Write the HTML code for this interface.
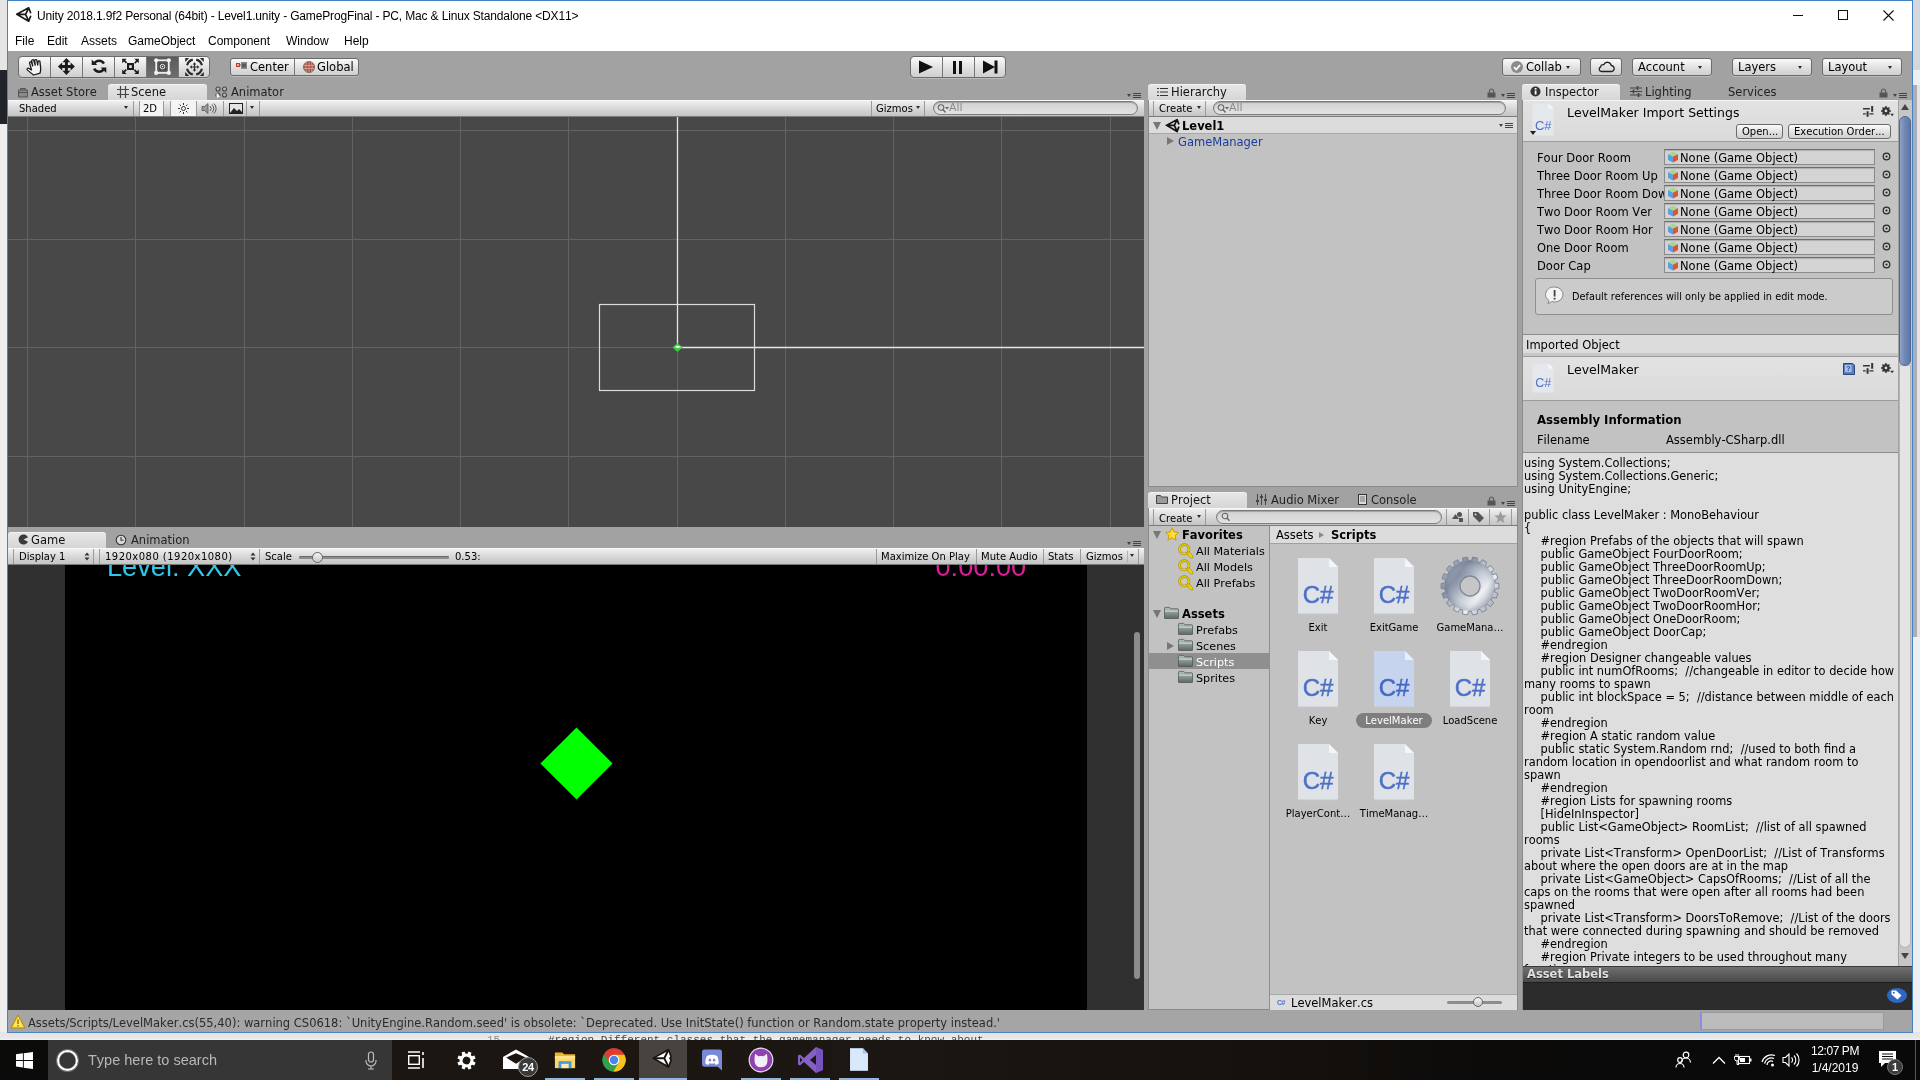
<!DOCTYPE html><html><head><meta charset="utf-8"><title>Unity</title><style>*{box-sizing:border-box;margin:0;padding:0}
html,body{width:1920px;height:1080px;overflow:hidden;background:#f2f2f2}
body{position:relative;will-change:transform;font-kerning:none;font-family:"DejaVu Sans","Liberation Sans",sans-serif;font-size:11.5px;color:#000;line-height:1}
.a{position:absolute}
.t{position:absolute;white-space:pre;line-height:16px;height:16px}
.seg{font-family:"Liberation Sans",sans-serif}
.b{font-weight:bold}
/* unity panels */
.panel{position:absolute;background:#c2c2c2}
.tab{position:absolute;height:17px;margin-top:1px;height:16px;border-top:1px solid #f2f2f2;border-radius:3px 3px 0 0;background:linear-gradient(#e6e6e6,#d6d6d6)}
.tabt{position:absolute;white-space:pre;line-height:16px;height:16px;font-size:11.5px;color:#111}
.tb{position:absolute;height:17px;background:linear-gradient(#f0f0f0,#dadada 45%,#c4c4c4);border-top:1px solid #f8f8f8;border-bottom:1px solid #7a7a7a}
.tbsep{position:absolute;width:1px;top:0;bottom:0;background:#9a9a9a}
.search{position:absolute;height:14px;border-radius:7px;background:linear-gradient(#d2d2d2,#e2e2e2);border:1px solid #7d7d7d;box-shadow:inset 0 1px 1px rgba(0,0,0,.25)}
.btn{position:absolute;border:1px solid #6b6b6b;border-radius:3px;background:linear-gradient(#fbfbfb,#dedede 60%,#cfcfcf);box-shadow:0 1px 0 rgba(255,255,255,.25)}
.dd{position:absolute;width:0;height:0;border-left:2.500px solid transparent;border-right:2.500px solid transparent;border-top:3.500px solid #2a2a2a}
</style></head><body>
<!-- desktop strips behind the Unity window -->
<div class="a" style="left:0;top:0;width:8px;height:70px;background:#e6e6e6"></div>
<div class="a" style="left:0;top:70px;width:8px;height:54px;background:#20242a"></div>
<div class="a" style="left:0;top:124px;width:8px;height:916px;background:linear-gradient(90deg,#f3ede9,#e8f0fa)"></div>
<div class="a" style="left:1912px;top:0;width:8px;height:1040px;background:#eceff4"></div><div class="a" style="left:1912px;top:0;width:8px;height:70px;background:#d4d8de"></div><div class="a" style="left:1913px;top:85px;width:4px;height:552px;background:#a9aeb8"></div><div class="a" style="left:1917px;top:85px;width:3px;height:552px;background:#e8e2e2"></div>
<div class="a" style="left:0;top:1032px;width:1920px;height:8px;background:linear-gradient(#dfe6ee,#ece4e0 40%,#e4e8ee 70%,#f4f2f0);overflow:hidden">
  <div class="a" style="left:487px;top:1px;font-family:'Liberation Mono',monospace;font-size:11px;color:#8a8a8a;white-space:pre;line-height:14px">15</div>
  <div class="a" style="left:548px;top:1px;font-family:'Liberation Mono',monospace;font-size:11px;color:#444;white-space:pre;line-height:14px">#region Different classes that the gamemanager needs to know about</div>
</div>

<!-- Unity window frame, title bar, menu, main toolbar -->
<div class="a" style="left:7px;top:0;width:1906px;height:1033px;background:#a2a2a2;border:1px solid #4583c2"></div>
<div class="a" style="left:8px;top:1px;width:1904px;height:50px;background:#fff"></div>
<svg class="a" style="left:15px;top:6px" width="18" height="18" viewBox="0 0 18 18"><path d="M15.800 7.200 13.700 1.800 1.800 8.300 13.700 15.200 15.800 9.800M1.800 8.300H10.600M10.600 8.400 13.700 1.800M10.600 8.400 13.700 15.200" fill="none" stroke="#1a1a1a" stroke-width="1.700" stroke-linejoin="round"/></svg>
<div class="t seg" style="left:37px;top:8px;font-size:12px;letter-spacing:-0.15px">Unity 2018.1.9f2 Personal (64bit) - Level1.unity - GameProgFinal - PC, Mac &amp; Linux Standalone &lt;DX11&gt;</div>
<div class="a" style="left:1793px;top:15px;width:10px;height:1px;background:#111"></div>
<div class="a" style="left:1838px;top:10px;width:10px;height:10px;border:1px solid #111"></div>
<svg class="a" style="left:1883px;top:10px" width="11" height="11" viewBox="0 0 11 11"><path d="M.5.5l10 10M10.500.5l-10 10" stroke="#111" stroke-width="1.1" fill="none"/></svg>
<div class="t seg" style="left:15px;top:33px;font-size:12px">File</div>
<div class="t seg" style="left:47px;top:33px;font-size:12px">Edit</div>
<div class="t seg" style="left:81px;top:33px;font-size:12px">Assets</div>
<div class="t seg" style="left:128px;top:33px;font-size:12px">GameObject</div>
<div class="t seg" style="left:208px;top:33px;font-size:12px">Component</div>
<div class="t seg" style="left:286px;top:33px;font-size:12px">Window</div>
<div class="t seg" style="left:344px;top:33px;font-size:12px">Help</div>
<!-- transform tools -->
<div class="btn" style="left:18px;top:56px;width:192px;height:22px;border-radius:4px;overflow:hidden">
  <div class="a" style="left:127px;top:0;width:32px;height:20px;background:linear-gradient(#5a5a5a,#6e6e6e)"></div>
  <div class="tbsep" style="left:31px;background:#777"></div><div class="tbsep" style="left:63px;background:#777"></div><div class="tbsep" style="left:95px;background:#777"></div><div class="tbsep" style="left:127px;background:#777"></div><div class="tbsep" style="left:159px;background:#777"></div>
</div>
<svg class="a" style="left:18px;top:56px" width="192" height="22" viewBox="0 0 192 22">
<g transform="translate(7.600,2.600) rotate(-16 8 8) scale(1.130,1.020)"><path d="M5 15.800C3.500 13.500 2 11 1 9.500 .3 8.300 1.800 7.300 2.800 8.400L4.500 10.500V3.500C4.500 2.200 6.300 2.200 6.300 3.500L6.500 7 6.800 2C6.900.7 8.700.8 8.700 2L8.800 7 9.500 2.500C9.700 1.300 11.400 1.500 11.300 2.800L11 7.500 12 4.500C12.400 3.400 14 3.800 13.700 5 13.300 7 13 10 12.500 12 12.200 13.500 11.500 14.500 11 15.800Z" fill="#f6f6f6" stroke="#1c1c1c" stroke-width="1.150" stroke-linejoin="round"/></g>
<g transform="translate(48.400,10.500)"><path d="M0-8.500 4-4.200H1.500V-1.500H4.200V-4L8.500 0 4.200 4V1.500H1.500V4.200H4L0 8.500-4 4.200H-1.500V1.500H-4.200V4L-8.500 0-4.200-4V-1.500H-1.500V-4.200H-4Z" fill="#1c1c1c"/></g>
<g transform="translate(81,10.200)" fill="none" stroke="#1c1c1c" stroke-width="2.500"><path d="M-4.800-2.600A5.500 5.500 0 0 1 4.900-2.500"/><path d="M4.800 2.600A5.500 5.500 0 0 1-4.900 2.500"/><path d="M-7.300-6.800V-1.200H-1.700Z" fill="#1c1c1c" stroke="none"/><path d="M7.300 6.800V1.200H1.700Z" fill="#1c1c1c" stroke="none"/></g>
<g transform="translate(112.500,10.600)" fill="#1c1c1c"><path d="M-3.500-3.500h7v7h-7zM-1.300-1.300v2.600h2.600v-2.600z" fill-rule="evenodd"/><path d="M-8.300-7.800h4.500l-1.500 1.500 2 2-1.200 1.200-2-2-1.800 1.800zM8.300-7.800v4.500l-1.500-1.500-2 2-1.200-1.200 2-2-1.800-1.800zM-8.300 7.400v-4.500l1.500 1.500 2-2 1.200 1.200-2 2 1.800 1.800zM8.300 7.400h-4.500l1.500-1.500-2-2 1.200-1.200 2 2 1.800-1.800z"/></g>
<g transform="translate(144.500,10.600)"><rect x="-4" y="-4" width="8" height="8" fill="#474747"/><rect x="-6.300" y="-6.300" width="12.600" height="12.600" fill="none" stroke="#f2f2f2" stroke-width="1.700"/><g fill="#f2f2f2"><circle cx="-6.300" cy="-6.300" r="2.100"/><circle cx="6.300" cy="-6.300" r="2.100"/><circle cx="-6.300" cy="6.300" r="2.100"/><circle cx="6.300" cy="6.300" r="2.100"/></g><circle r="2.300" fill="none" stroke="#e8e8e8" stroke-width="1"/><circle r=".8" fill="#e8e8e8"/></g>
<g transform="translate(176.500,11)"><g fill="none" stroke="#2a2a2a" stroke-width="2.200"><path d="M7.4 1.7A7.6 7.6 0 0 1 1.7 7.4"/><path d="M-1.7 7.4A7.6 7.6 0 0 1 -7.4 1.7"/><path d="M-7.4 -1.7A7.6 7.6 0 0 1 -1.7 -7.4"/><path d="M1.7 -7.4A7.6 7.6 0 0 1 7.4 -1.7"/></g><path d="M-9.300-9h4l-4 4zM9.300-9v4l-4-4zM-9.300 9v-4l4 4zM9.300 9h-4l4-4z" fill="#2a2a2a"/><path d="M0-4.800 1.800-2.600H.6V-.6H2.600V-1.800L4.800 0 2.600 1.800V.6H.6V2.600H1.800L0 4.800-1.800 2.600H-.6V.6H-2.600V1.800L-4.800 0-2.600-1.800V-.6H-.6V-2.600H-1.800Z" fill="#2a2a2a"/></g>
</svg>
<!-- pivot buttons -->
<div class="btn" style="left:230px;top:58px;width:129px;height:18px;border-radius:3px"><div class="tbsep" style="left:63px;background:#777"></div></div>
<svg class="a" style="left:236px;top:62px" width="11" height="10" viewBox="0 0 11 10"><rect x="0" y="1" width="4" height="4" fill="#c0392b"/><rect x="1" y="2" width="2" height="2" fill="#e8a79f"/><rect x="5" y="0" width="6" height="7" fill="#8a8a8a"/><rect x="6" y="1.500" width="4" height="4" fill="#5a5a5a"/><path d="M4 3h1" stroke="#555"/></svg>
<svg class="a" style="left:303px;top:61px" width="12" height="12" viewBox="0 0 12 12"><circle cx="6" cy="6" r="5.500" fill="#b3503f"/><circle cx="6" cy="6" r="5.500" fill="none" stroke="#6e6e6e" stroke-width="1"/><path d="M1 4.500h10M.8 7.500h10.400M6 .5v11M3.500 1.200Q2 6 3.500 10.800M8.500 1.200Q10 6 8.500 10.800" fill="none" stroke="#d9b0a6" stroke-width=".7"/></svg>
<div class="t" style="left:250px;top:59px">Center</div>
<div class="t" style="left:317px;top:59px">Global</div>
<!-- play controls -->
<div class="btn" style="left:910px;top:56px;width:96px;height:22px;border-radius:4px"><div class="tbsep" style="left:31px;background:#777"></div><div class="tbsep" style="left:63px;background:#777"></div></div>
<svg class="a" style="left:910px;top:56px" width="96" height="22" viewBox="0 0 96 22"><path d="M9 4.500l14 6.500-14 6.500z" fill="#111"/><rect x="43" y="5" width="3" height="13" fill="#111"/><rect x="49" y="5" width="3" height="13" fill="#111"/><path d="M73 4.500l12 6.500-12 6.500z" fill="#111"/><rect x="84.500" y="4.500" width="3" height="13" fill="#111"/></svg>
<!-- right side buttons -->
<div class="btn" style="left:1502px;top:58px;width:79px;height:18px"></div>
<div class="a" style="left:1511px;top:61px;width:12px;height:12px;border-radius:6px;background:#8b8b8b"></div>
<svg class="a" style="left:1511px;top:61px" width="12" height="12" viewBox="0 0 12 12"><path d="M3 6.200l2.200 2.300L9 4" stroke="#fff" stroke-width="1.800" fill="none"/></svg>
<div class="t" style="left:1526px;top:59px">Collab</div><div class="dd" style="left:1566px;top:66px"></div>
<div class="btn" style="left:1590px;top:58px;width:32px;height:18px"></div>
<svg class="a" style="left:1597px;top:61px" width="18" height="12" viewBox="0 0 18 12"><path d="M4.500 10.500h9.500a3 3 0 0 0 .3-6 4 4 0 0 0-7.600-.8 2.300 2.300 0 0 0-3 2.200 2.400 2.400 0 0 0 .8 4.600z" fill="none" stroke="#222" stroke-width="1.300"/></svg>
<div class="btn" style="left:1632px;top:58px;width:80px;height:18px"></div>
<div class="t" style="left:1638px;top:59px">Account</div><div class="dd" style="left:1698px;top:66px"></div>
<div class="btn" style="left:1732px;top:58px;width:80px;height:18px"></div>
<div class="t" style="left:1738px;top:59px">Layers</div><div class="dd" style="left:1798px;top:66px"></div>
<div class="btn" style="left:1822px;top:58px;width:80px;height:18px"></div>
<div class="t" style="left:1828px;top:59px">Layout</div><div class="dd" style="left:1888px;top:66px"></div>

<!-- Scene panel -->
<div class="tabt" style="left:31px;top:84px;color:#222">Asset Store</div>
<div class="tab" style="left:108px;top:83px;width:99px"></div>
<div class="tabt" style="left:131px;top:84px">Scene</div>
<div class="tabt" style="left:231px;top:84px;color:#222">Animator</div>
<svg class="a" style="left:17px;top:86px" width="12" height="12" viewBox="0 0 12 12"><path d="M1.500 4h9v7h-9zM3.500 4V2.500h5V4" fill="#8a8a8a" stroke="#555" stroke-width="1"/><path d="M1.500 6.500h9" stroke="#555"/></svg>
<svg class="a" style="left:117px;top:86px" width="12" height="12" viewBox="0 0 12 12"><path d="M3.500 0v12M8.500 0v12M0 3.500h12M0 8.500h12" stroke="#444" stroke-width="1.200"/></svg>
<svg class="a" style="left:215px;top:86px" width="13" height="12" viewBox="0 0 13 12"><g fill="#bbb" stroke="#444" stroke-width="1.100"><circle cx="3" cy="3" r="2"/><circle cx="9.500" cy="3" r="2"/><circle cx="3" cy="9" r="2"/><circle cx="9.500" cy="9" r="2"/></g></svg>
<div class="dd" style="left:1127px;top:94px;border-left-width:2.500px;border-right-width:2.500px;border-top-width:3px;border-top-color:#444"></div><div class="a" style="left:1133px;top:93px;width:8px;height:1px;background:#444;box-shadow:0 2px 0 #444,0 4px 0 #444"></div>
<div class="tb" style="left:8px;top:100px;width:1136px"></div>
<div class="t" style="left:19px;top:101px;font-size:10px">Shaded</div><div class="dd" style="left:124px;top:106px;border-left-width:2.500px;border-right-width:2.500px;border-top-width:3px"></div>
<div class="tbsep" style="left:133px;top:101px;height:15px"></div>
<div class="a" style="left:139px;top:101px;width:25px;height:15px;background:#f4f4f4;border-left:1px solid #9a9a9a;border-right:1px solid #9a9a9a"></div><div class="t" style="left:143px;top:101px;font-size:10px">2D</div>
<div class="a" style="left:170px;top:101px;width:27px;height:15px;background:#f4f4f4;border-left:1px solid #9a9a9a;border-right:1px solid #9a9a9a"></div>
<svg class="a" style="left:177px;top:102px" width="13" height="13" viewBox="0 0 13 13"><circle cx="6.500" cy="6.500" r="2" fill="none" stroke="#333" stroke-width="1"/><path d="M6.500 1v2M6.500 10v2M1 6.500h2M10 6.500h2M2.600 2.600l1.400 1.400M9 9l1.400 1.400M2.600 10.400 4 9M9 4l1.400-1.400" stroke="#333" stroke-width="1"/></svg>
<div class="tbsep" style="left:223px;top:101px;height:15px"></div>
<svg class="a" style="left:201px;top:102px" width="16" height="13" viewBox="0 0 16 13"><path d="M1 4.500h2.500l3.500-3v10l-3.500-3H1z" fill="#999" stroke="#555" stroke-width=".8"/><path d="M9 4a3.500 3.500 0 0 1 0 5M11 2.500a5.500 5.500 0 0 1 0 8M13 1.500a7 7 0 0 1 0 10" fill="none" stroke="#555" stroke-width="1"/></svg>
<svg class="a" style="left:229px;top:103px" width="14" height="11" viewBox="0 0 14 11"><rect x=".5" y=".5" width="13" height="10" fill="#e4e4e4" stroke="#222"/><path d="M1 10l4-5 3 3 2-2 3 3v1z" fill="#222"/></svg>
<div class="tbsep" style="left:246px;top:101px;height:15px"></div><div class="dd" style="left:250px;top:106px;border-left-width:2.500px;border-right-width:2.500px;border-top-width:3px"></div><div class="tbsep" style="left:259px;top:101px;height:15px"></div>
<div class="tbsep" style="left:871px;top:101px;height:15px"></div><div class="t" style="left:876px;top:101px;font-size:10px">Gizmos</div><div class="dd" style="left:916px;top:106px;border-left-width:2.500px;border-right-width:2.500px;border-top-width:3px"></div><div class="tbsep" style="left:924px;top:101px;height:15px"></div>
<div class="search" style="left:933px;top:101px;width:205px"></div>
<svg class="a" style="left:937px;top:103px" width="14" height="11" viewBox="0 0 14 11"><circle cx="4" cy="4.500" r="2.800" fill="none" stroke="#666" stroke-width="1.100"/><path d="M6 6.500l2.500 3" stroke="#666" stroke-width="1.300"/><path d="M8 4h4l-2 2.500z" fill="#666"/></svg>
<div class="t" style="left:949px;top:100px;color:#8c8c8c;font-size:11px">All</div>
<div class="a" style="left:8px;top:117px;width:1136px;height:410px;background:#484848;overflow:hidden">
<svg class="a" style="left:0;top:0" width="1136" height="410" viewBox="8 117 1136 410">
<path d="M27.5 117v410" stroke="#636363" stroke-width="1"/>
<path d="M135.5 117v410" stroke="#636363" stroke-width="1"/>
<path d="M244.5 117v410" stroke="#636363" stroke-width="1"/>
<path d="M352.5 117v410" stroke="#636363" stroke-width="1"/>
<path d="M460.5 117v410" stroke="#636363" stroke-width="1"/>
<path d="M568.5 117v410" stroke="#636363" stroke-width="1"/>
<path d="M677.5 117v410" stroke="#636363" stroke-width="1"/>
<path d="M785.5 117v410" stroke="#636363" stroke-width="1"/>
<path d="M893.5 117v410" stroke="#636363" stroke-width="1"/>
<path d="M1001.5 117v410" stroke="#636363" stroke-width="1"/>
<path d="M1110.5 117v410" stroke="#636363" stroke-width="1"/>
<path d="M8 130.5h1136" stroke="#636363" stroke-width="1"/>
<path d="M8 239.5h1136" stroke="#636363" stroke-width="1"/>
<path d="M8 347.5h1136" stroke="#636363" stroke-width="1"/>
<path d="M8 456.5h1136" stroke="#636363" stroke-width="1"/>
<path d="M677.500 117v230" stroke="#e6e6e6" stroke-width="1.300"/><path d="M678 347.500h466" stroke="#e6e6e6" stroke-width="1.300"/>
<rect x="599.500" y="304.500" width="155" height="86" fill="none" stroke="#dcdcdc" stroke-width="1.200"/>
<path d="M677.500 343l5 4.500-5 4.500-5-4.500z" fill="#3dc83d"/><path d="M674.500 347l3-1.500 4 1.500-4 1z" fill="#fff"/>
</svg></div>
<svg class="a" style="left:216px;top:92px" width="6" height="8" viewBox="0 0 6 8"><path d="M.5.5v6.500l1.700-1.600h2.600z" fill="#fff" stroke="#888" stroke-width=".5"/></svg>
<!-- Game panel -->
<div class="tab" style="left:8px;top:531px;width:98px"></div>
<svg class="a" style="left:18px;top:534px" width="11" height="11" viewBox="0 0 11 11"><path d="M5.500 5.500 10 3.200A5 5 0 1 0 10 7.800z" fill="#3a3a3a"/></svg>
<div class="tabt" style="left:31px;top:532px">Game</div>
<svg class="a" style="left:115px;top:534px" width="12" height="12" viewBox="0 0 12 12"><circle cx="6" cy="6" r="4.800" fill="#d8d8d8" stroke="#333" stroke-width="1.100"/><path d="M6 3v3.200h2.500" stroke="#333" stroke-width="1.100" fill="none"/></svg>
<div class="tabt" style="left:131px;top:532px;color:#222">Animation</div>
<div class="dd" style="left:1127px;top:542px;border-left-width:2.500px;border-right-width:2.500px;border-top-width:3px;border-top-color:#444"></div><div class="a" style="left:1133px;top:541px;width:8px;height:1px;background:#444;box-shadow:0 2px 0 #444,0 4px 0 #444"></div>
<div class="tb" style="left:8px;top:548px;width:1136px"></div>
<div class="tbsep" style="left:13px;top:549px;height:15px"></div>
<div class="t" style="left:19px;top:549px;font-size:10px">Display 1</div>
<svg class="a" style="left:84px;top:552px" width="6" height="9" viewBox="0 0 6 9"><path d="M3 .5l2.500 3h-5zM3 8.500l2.500-3h-5z" fill="#333"/></svg>
<div class="tbsep" style="left:93px;top:549px;height:15px"></div><div class="tbsep" style="left:99px;top:549px;height:15px"></div>
<div class="t" style="left:105px;top:549px;font-size:10px;letter-spacing:.47px">1920x080 (1920x1080)</div>
<svg class="a" style="left:250px;top:552px" width="6" height="9" viewBox="0 0 6 9"><path d="M3 .5l2.500 3h-5zM3 8.500l2.500-3h-5z" fill="#333"/></svg>
<div class="tbsep" style="left:259px;top:549px;height:15px"></div>
<div class="t" style="left:265px;top:549px;font-size:10px">Scale</div>
<div class="a" style="left:299px;top:556px;width:150px;height:3px;border-radius:2px;background:#8d8d8d;box-shadow:inset 0 1px 0 #6a6a6a"></div>
<div class="a" style="left:312px;top:552px;width:11px;height:11px;border-radius:6px;background:linear-gradient(#f4f4f4,#c8c8c8);border:1px solid #666"></div>
<div class="t" style="left:455px;top:549px;font-size:10px">0.53:</div>
<div class="tbsep" style="left:876px;top:549px;height:15px"></div>
<div class="tbsep" style="left:976px;top:549px;height:15px"></div>
<div class="tbsep" style="left:1043px;top:549px;height:15px"></div>
<div class="tbsep" style="left:1080px;top:549px;height:15px"></div>
<div class="tbsep" style="left:1138px;top:549px;height:15px"></div>
<div class="t" style="left:881px;top:549px;font-size:10px">Maximize On Play</div>
<div class="t" style="left:981px;top:549px;font-size:10px">Mute Audio</div>
<div class="t" style="left:1048px;top:549px;font-size:10px">Stats</div>
<div class="t" style="left:1086px;top:549px;font-size:10px">Gizmos</div>
<div class="tbsep" style="left:1127px;top:551px;height:11px;background:#b0b0b0"></div><div class="dd" style="left:1130px;top:554px;border-left-width:2.500px;border-right-width:2.500px;border-top-width:3px"></div>
<div class="a" style="left:8px;top:565px;width:1136px;height:445px;background:#303030;overflow:hidden">
<div class="a" style="left:57px;top:0;width:1022px;height:445px;background:#000"></div>
<div class="a seg" style="left:99px;top:-13px;font-size:27.200px;line-height:30px;color:#2ec8ea;white-space:pre">Level: XXX</div>
<div class="a seg" style="left:927.500px;top:-13px;font-size:27.200px;line-height:30px;color:#e01c9c;white-space:pre">0:00:00</div>
<div class="a" style="left:542.500px;top:172.500px;width:51px;height:51px;background:#00ff00;transform:rotate(45deg)"></div>
<div class="a" style="left:1126px;top:67px;width:6px;height:347px;border-radius:3px;background:#8c8c8c"></div>
</div>
<!-- Hierarchy panel -->
<div class="panel" style="left:1148px;top:100px;width:370px;height:387px;border:1px solid #8a8a8a;border-top:none"></div>
<div class="tab" style="left:1148px;top:83px;width:98px"></div>
<svg class="a" style="left:1157px;top:87px" width="11" height="10" viewBox="0 0 11 10"><path d="M3 1.500h8M3 5h8M3 8.500h8" stroke="#333" stroke-width="1.200"/><path d="M0 1.500h2M0 5h2M0 8.500h2" stroke="#333" stroke-width="1.200"/></svg>
<div class="tabt" style="left:1171px;top:84px">Hierarchy</div>
<svg class="a" style="left:1487px;top:88px" width="9" height="10" viewBox="0 0 9 10"><rect x=".5" y="4.500" width="8" height="5" fill="#555"/><path d="M2.500 4.500V3a2 2 0 0 1 4 0V4.500" fill="none" stroke="#555" stroke-width="1.200"/></svg>
<div class="dd" style="left:1501px;top:94px;border-left-width:2.500px;border-right-width:2.500px;border-top-width:3px;border-top-color:#444"></div><div class="a" style="left:1507px;top:93px;width:8px;height:1px;background:#444;box-shadow:0 2px 0 #444,0 4px 0 #444"></div>
<div class="tb" style="left:1149px;top:100px;width:368px"></div>
<div class="tbsep" style="left:1153px;top:101px;height:15px"></div>
<div class="t" style="left:1159px;top:101px;font-size:10px">Create</div><div class="dd" style="left:1197px;top:106px;border-left-width:2.500px;border-right-width:2.500px;border-top-width:3px"></div><div class="tbsep" style="left:1205px;top:101px;height:15px"></div>
<div class="search" style="left:1213px;top:101px;width:293px"></div>
<svg class="a" style="left:1217px;top:103px" width="14" height="11" viewBox="0 0 14 11"><circle cx="4" cy="4.500" r="2.800" fill="none" stroke="#666" stroke-width="1.100"/><path d="M6 6.500l2.500 3" stroke="#666" stroke-width="1.300"/><path d="M8 4h4l-2 2.500z" fill="#666"/></svg>
<div class="t" style="left:1229px;top:100px;color:#8c8c8c;font-size:11px">All</div>
<div class="a" style="left:1149px;top:117px;width:368px;height:17px;background:#dcdcdc;border-bottom:1px solid #a8a8a8"></div>
<div class="a" style="left:1153px;top:122px;width:0;height:0;border-left:4.500px solid transparent;border-right:4.500px solid transparent;border-top:8px solid #777"></div>
<svg class="a" style="left:1165px;top:118px" width="15" height="15" viewBox="0 0 17 17"><path d="M15.800 7.200 13.700 1.800 1.800 8.300 13.700 15.200 15.800 9.800M1.800 8.300H10.600M10.600 8.400 13.700 1.800M10.600 8.400 13.700 15.200" fill="none" stroke="#111" stroke-width="1.900"/></svg>
<div class="t b" style="left:1182px;top:118px;font-size:11.500px">Level1</div>
<div class="dd" style="left:1499px;top:124px;border-left-width:2.500px;border-right-width:2.500px;border-top-width:3px;border-top-color:#444"></div><div class="a" style="left:1505px;top:123px;width:8px;height:1px;background:#444;box-shadow:0 2px 0 #444,0 4px 0 #444"></div>
<div class="a" style="left:1167px;top:137px;width:0;height:0;border-top:4px solid transparent;border-bottom:4px solid transparent;border-left:7px solid #777"></div>
<div class="t" style="left:1178px;top:134px;color:#1a3d9e">GameManager</div>
<!-- Project panel -->
<div class="panel" style="left:1148px;top:508px;width:370px;height:502px;border:1px solid #8a8a8a;border-top:none"></div>
<div class="tab" style="left:1148px;top:491px;width:99px"></div>
<svg class="a" style="left:1156px;top:494px" width="12" height="10" viewBox="0 0 12 10"><path d="M.5 9.500v-8h4l1 1.500h6v6.500z" fill="#9a9a9a" stroke="#444" stroke-width="1"/></svg>
<div class="tabt" style="left:1171px;top:492px">Project</div>
<svg class="a" style="left:1256px;top:494px" width="11" height="11" viewBox="0 0 11 11"><path d="M1.500 0v11M5.500 0v11M9.500 0v11" stroke="#444" stroke-width="1"/><path d="M0 7h3M4 3h3M8 6h3" stroke="#444" stroke-width="2"/></svg>
<div class="tabt" style="left:1271px;top:492px;color:#222">Audio Mixer</div>
<svg class="a" style="left:1358px;top:494px" width="9" height="11" viewBox="0 0 9 11"><rect x=".5" y=".5" width="8" height="10" fill="#ddd" stroke="#333"/><path d="M2 3h5M2 5h5M2 7h5" stroke="#555" stroke-width=".8"/></svg>
<div class="tabt" style="left:1371px;top:492px;color:#222">Console</div>
<svg class="a" style="left:1487px;top:496px" width="9" height="10" viewBox="0 0 9 10"><rect x=".5" y="4.500" width="8" height="5" fill="#555"/><path d="M2.500 4.500V3a2 2 0 0 1 4 0V4.500" fill="none" stroke="#555" stroke-width="1.200"/></svg>
<div class="dd" style="left:1501px;top:502px;border-left-width:2.500px;border-right-width:2.500px;border-top-width:3px;border-top-color:#444"></div><div class="a" style="left:1507px;top:501px;width:8px;height:1px;background:#444;box-shadow:0 2px 0 #444,0 4px 0 #444"></div>
<div class="tb" style="left:1149px;top:508px;width:368px;height:18px"></div>
<div class="tbsep" style="left:1153px;top:509px;height:16px"></div>
<div class="t" style="left:1159px;top:511px;font-size:10px">Create</div><div class="dd" style="left:1197px;top:515px;border-left-width:2.500px;border-right-width:2.500px;border-top-width:3px"></div><div class="tbsep" style="left:1205px;top:509px;height:16px"></div>
<div class="search" style="left:1216px;top:510px;width:226px"></div>
<svg class="a" style="left:1221px;top:512px" width="10" height="10" viewBox="0 0 10 10"><circle cx="4" cy="4" r="2.800" fill="none" stroke="#666" stroke-width="1.100"/><path d="M6 6l2.500 2.800" stroke="#666" stroke-width="1.300"/></svg>
<div class="tbsep" style="left:1446px;top:509px;height:16px"></div>
<div class="tbsep" style="left:1468px;top:509px;height:16px"></div>
<div class="tbsep" style="left:1489px;top:509px;height:16px"></div>
<div class="tbsep" style="left:1511px;top:509px;height:16px"></div>
<svg class="a" style="left:1451px;top:511px" width="13" height="12" viewBox="0 0 13 12"><path d="M1 8l3.500-5 3.500 5z" fill="#555"/><circle cx="8.500" cy="3.500" r="2.500" fill="#555"/><rect x="8" y="7" width="4" height="4" fill="#555"/></svg>
<svg class="a" style="left:1472px;top:511px" width="13" height="12" viewBox="0 0 13 12"><path d="M1 1h5l6 6-4.500 4.500-6.500-6.500z" fill="#555"/><circle cx="3.500" cy="3.500" r="1" fill="#ddd"/></svg>
<svg class="a" style="left:1494px;top:511px" width="13" height="12" viewBox="0 0 13 12"><path d="M6.500 0l1.700 4.300 4.300.3-3.300 2.900 1.100 4.500-3.800-2.500-3.800 2.500 1.100-4.500L.5 4.600l4.300-.3z" fill="#9c9c9c"/></svg>
<div class="a" style="left:1269px;top:526px;width:1px;height:484px;background:#8f8f8f"></div>
<div class="a" style="left:1270px;top:526px;width:247px;height:18px;background:#dcdcdc;border-bottom:1px solid #a0a0a0"></div>
<div class="t" style="left:1276px;top:527px">Assets</div>
<div class="a" style="left:1319px;top:532px;width:0;height:0;border-top:3px solid transparent;border-bottom:3px solid transparent;border-left:5px solid #888"></div>
<div class="t b" style="left:1331px;top:527px">Scripts</div>
<div class="a" style="left:1153px;top:531px;width:0;height:0;border-left:4.500px solid transparent;border-right:4.500px solid transparent;border-top:8px solid #777"></div>
<svg class="a" style="left:1165px;top:527px" width="14" height="14" viewBox="0 0 16 16"><path stroke-linejoin="round" d="M8 .8l2.200 4.900 5.300.5-4 3.600 1.200 5.300L8 12.300l-4.700 2.800 1.200-5.300-4-3.600 5.300-.5z" fill="#ffd81e" stroke="#c89600" stroke-width="1"/><path d="M8 3l1.500 3.500 3.500.3-2.700 2.400.8 3.500L8 10.800z" fill="#ffec70" opacity=".6"/></svg>
<div class="t b" style="left:1182px;top:527px">Favorites</div>
<svg class="a" style="left:1178px;top:543px" width="16" height="16" viewBox="0 0 16 16"><circle cx="6.300" cy="6.300" r="4.700" fill="#c9c9bf" stroke="#a88c00" stroke-width="2.600"/><circle cx="6.300" cy="6.300" r="4.700" fill="none" stroke="#f2d800" stroke-width="1.400"/><path d="M10.300 10.300l3.500 3.500" stroke="#b89a00" stroke-width="3.400" stroke-linecap="round"/><path d="M10.300 10.300l3.500 3.500" stroke="#f2d800" stroke-width="2" stroke-linecap="round"/></svg>
<div class="t" style="left:1196px;top:544px;font-size:11.200px">All Materials</div>
<svg class="a" style="left:1178px;top:559px" width="16" height="16" viewBox="0 0 16 16"><circle cx="6.300" cy="6.300" r="4.700" fill="#c9c9bf" stroke="#a88c00" stroke-width="2.600"/><circle cx="6.300" cy="6.300" r="4.700" fill="none" stroke="#f2d800" stroke-width="1.400"/><path d="M10.300 10.300l3.500 3.500" stroke="#b89a00" stroke-width="3.400" stroke-linecap="round"/><path d="M10.300 10.300l3.500 3.500" stroke="#f2d800" stroke-width="2" stroke-linecap="round"/></svg>
<div class="t" style="left:1196px;top:560px;font-size:11.200px">All Models</div>
<svg class="a" style="left:1178px;top:575px" width="16" height="16" viewBox="0 0 16 16"><circle cx="6.300" cy="6.300" r="4.700" fill="#c9c9bf" stroke="#a88c00" stroke-width="2.600"/><circle cx="6.300" cy="6.300" r="4.700" fill="none" stroke="#f2d800" stroke-width="1.400"/><path d="M10.300 10.300l3.500 3.500" stroke="#b89a00" stroke-width="3.400" stroke-linecap="round"/><path d="M10.300 10.300l3.500 3.500" stroke="#f2d800" stroke-width="2" stroke-linecap="round"/></svg>
<div class="t" style="left:1196px;top:576px;font-size:11.200px">All Prefabs</div>
<div class="a" style="left:1153px;top:610px;width:0;height:0;border-left:4.500px solid transparent;border-right:4.500px solid transparent;border-top:8px solid #777"></div>
<svg class="a" style="left:1164px;top:606px" width="15" height="13" viewBox="0 0 16 14" preserveAspectRatio="none"><defs><linearGradient id="fg1164607" x1="0" y1="0" x2="0" y2="1"><stop offset="0" stop-color="#b4c0bd"/><stop offset="1" stop-color="#5a6866"/></linearGradient></defs><path d="M.5 13V2.500Q.5 1.500 1.500 1.500h4.500l1.500 1.500h7q1 0 1 1V13q0 .5-.5.500h-14q-.5 0-.5-.500z" fill="url(#fg1164607)" stroke="#4a5452" stroke-width=".8"/><path d="M1 5.500h14" stroke="#dfe5e3" stroke-width="1"/></svg>
<div class="t b" style="left:1182px;top:606px">Assets</div>
<svg class="a" style="left:1178px;top:622px" width="15" height="13" viewBox="0 0 16 14" preserveAspectRatio="none"><defs><linearGradient id="fg1178623" x1="0" y1="0" x2="0" y2="1"><stop offset="0" stop-color="#b4c0bd"/><stop offset="1" stop-color="#5a6866"/></linearGradient></defs><path d="M.5 13V2.500Q.5 1.500 1.500 1.500h4.500l1.500 1.500h7q1 0 1 1V13q0 .5-.5.500h-14q-.5 0-.5-.500z" fill="url(#fg1178623)" stroke="#4a5452" stroke-width=".8"/><path d="M1 5.500h14" stroke="#dfe5e3" stroke-width="1"/></svg>
<div class="t" style="left:1196px;top:623px;color:#000;font-size:11.200px">Prefabs</div>
<div class="a" style="left:1167px;top:642px;width:0;height:0;border-top:4px solid transparent;border-bottom:4px solid transparent;border-left:7px solid #777"></div>
<svg class="a" style="left:1178px;top:638px" width="15" height="13" viewBox="0 0 16 14" preserveAspectRatio="none"><defs><linearGradient id="fg1178639" x1="0" y1="0" x2="0" y2="1"><stop offset="0" stop-color="#b4c0bd"/><stop offset="1" stop-color="#5a6866"/></linearGradient></defs><path d="M.5 13V2.500Q.5 1.500 1.500 1.500h4.500l1.500 1.500h7q1 0 1 1V13q0 .5-.5.500h-14q-.5 0-.5-.500z" fill="url(#fg1178639)" stroke="#4a5452" stroke-width=".8"/><path d="M1 5.500h14" stroke="#dfe5e3" stroke-width="1"/></svg>
<div class="t" style="left:1196px;top:639px;color:#000;font-size:11.200px">Scenes</div>
<div class="a" style="left:1149px;top:653px;width:120px;height:16px;background:#8f8f8f"></div>
<svg class="a" style="left:1178px;top:654px" width="15" height="13" viewBox="0 0 16 14" preserveAspectRatio="none"><defs><linearGradient id="fg1178655" x1="0" y1="0" x2="0" y2="1"><stop offset="0" stop-color="#b4c0bd"/><stop offset="1" stop-color="#5a6866"/></linearGradient></defs><path d="M.5 13V2.500Q.5 1.500 1.500 1.500h4.500l1.500 1.500h7q1 0 1 1V13q0 .5-.5.500h-14q-.5 0-.5-.500z" fill="url(#fg1178655)" stroke="#4a5452" stroke-width=".8"/><path d="M1 5.500h14" stroke="#dfe5e3" stroke-width="1"/></svg>
<div class="t" style="left:1196px;top:655px;color:#fff;font-size:11.200px">Scripts</div>
<svg class="a" style="left:1178px;top:670px" width="15" height="13" viewBox="0 0 16 14" preserveAspectRatio="none"><defs><linearGradient id="fg1178671" x1="0" y1="0" x2="0" y2="1"><stop offset="0" stop-color="#b4c0bd"/><stop offset="1" stop-color="#5a6866"/></linearGradient></defs><path d="M.5 13V2.500Q.5 1.500 1.500 1.500h4.500l1.500 1.500h7q1 0 1 1V13q0 .5-.5.500h-14q-.5 0-.5-.500z" fill="url(#fg1178671)" stroke="#4a5452" stroke-width=".8"/><path d="M1 5.500h14" stroke="#dfe5e3" stroke-width="1"/></svg>
<div class="t" style="left:1196px;top:671px;color:#000;font-size:11.200px">Sprites</div>
<svg class="a" style="left:1297px;top:557px" width="42" height="58" viewBox="0 0 42 58"><path d="M1 1h31l9 9v47H1z" fill="#dfe2e6"/><path d="M32 1v9h9z" fill="#f4f5f7"/><path d="M1 57h40" stroke="#c4c7cc" stroke-width="1"/><text x="21" y="45.600" text-anchor="middle" font-family="Liberation Sans, sans-serif" font-size="24" fill="#4c6fc8" stroke="#4c6fc8" stroke-width=".45">C#</text></svg>
<div class="t" style="left:1268px;top:620px;width:100px;text-align:center;font-size:10px">Exit</div>
<svg class="a" style="left:1373px;top:557px" width="42" height="58" viewBox="0 0 42 58"><path d="M1 1h31l9 9v47H1z" fill="#dfe2e6"/><path d="M32 1v9h9z" fill="#f4f5f7"/><path d="M1 57h40" stroke="#c4c7cc" stroke-width="1"/><text x="21" y="45.600" text-anchor="middle" font-family="Liberation Sans, sans-serif" font-size="24" fill="#4c6fc8" stroke="#4c6fc8" stroke-width=".45">C#</text></svg>
<div class="t" style="left:1344px;top:620px;width:100px;text-align:center;font-size:10px">ExitGame</div>
<svg class="a" style="left:1440px;top:556px" width="60" height="60" viewBox="-30 -30 60 60"><defs><linearGradient id="gg" x1="0" y1="0.1" x2="1" y2="0.9"><stop offset="0" stop-color="#b9c1cf"/><stop offset=".28" stop-color="#7f8ba1"/><stop offset=".5" stop-color="#c4cad5"/><stop offset=".68" stop-color="#eef0f3"/><stop offset="1" stop-color="#8d97aa"/></linearGradient><radialGradient id="gh" cx=".5" cy=".5" r=".5"><stop offset=".55" stop-color="#e4e7ec" stop-opacity=".0"/><stop offset="1" stop-color="#5f6a80" stop-opacity=".35"/></radialGradient></defs><path d="M28.9 -2.5L28.9 2.5L25.1 2.9L24.6 5.9L28.0 7.6L26.3 12.2L22.6 11.3L21.1 13.9L23.7 16.7L20.6 20.5L17.4 18.4L15.1 20.3L16.6 23.8L12.3 26.3L10.1 23.2L7.2 24.2L7.4 28.0L2.6 28.9L1.5 25.3L-1.5 25.3L-2.6 28.9L-7.4 28.0L-7.2 24.2L-10.1 23.2L-12.3 26.3L-16.6 23.8L-15.1 20.3L-17.4 18.4L-20.6 20.5L-23.7 16.7L-21.1 13.9L-22.6 11.3L-26.3 12.2L-28.0 7.6L-24.6 5.9L-25.1 2.9L-28.9 2.5L-28.9 -2.5L-25.1 -2.9L-24.6 -5.9L-28.0 -7.6L-26.3 -12.2L-22.6 -11.3L-21.1 -13.9L-23.7 -16.7L-20.6 -20.5L-17.4 -18.4L-15.1 -20.3L-16.6 -23.8L-12.3 -26.3L-10.1 -23.2L-7.2 -24.2L-7.4 -28.0L-2.6 -28.9L-1.5 -25.3L1.5 -25.3L2.6 -28.9L7.4 -28.0L7.2 -24.2L10.1 -23.2L12.3 -26.3L16.6 -23.8L15.1 -20.3L17.4 -18.4L20.6 -20.5L23.7 -16.7L21.1 -13.9L22.6 -11.3L26.3 -12.2L28.0 -7.6L24.6 -5.9L25.1 -2.9Z" fill="url(#gg)" stroke="#7a8292" stroke-width=".9" stroke-linejoin="round"/><circle r="25" fill="url(#gh)"/><circle r="10" fill="#c6c6c6" stroke="#7f8798" stroke-width="1.300"/></svg>
<div class="t" style="left:1420px;top:620px;width:100px;text-align:center;font-size:10px">GameMana…</div>
<svg class="a" style="left:1297px;top:650px" width="42" height="58" viewBox="0 0 42 58"><path d="M1 1h31l9 9v47H1z" fill="#dfe2e6"/><path d="M32 1v9h9z" fill="#f4f5f7"/><path d="M1 57h40" stroke="#c4c7cc" stroke-width="1"/><text x="21" y="45.600" text-anchor="middle" font-family="Liberation Sans, sans-serif" font-size="24" fill="#4c6fc8" stroke="#4c6fc8" stroke-width=".45">C#</text></svg>
<div class="t" style="left:1268px;top:713px;width:100px;text-align:center;font-size:10px">Key</div>
<svg class="a" style="left:1373px;top:650px" width="42" height="58" viewBox="0 0 42 58"><path d="M1 1h31l9 9v47H1z" fill="#c6d4ee"/><path d="M32 1v9h9z" fill="#e8eefb"/><path d="M1 57h40" stroke="#c4c7cc" stroke-width="1"/><text x="21" y="45.600" text-anchor="middle" font-family="Liberation Sans, sans-serif" font-size="24" fill="#4468c4" stroke="#4468c4" stroke-width=".45">C#</text></svg>
<div class="a" style="left:1356px;top:713px;width:76px;height:15px;border-radius:8px;background:#7e7e7e"></div>
<div class="t" style="left:1344px;top:713px;width:100px;text-align:center;font-size:10px;color:#fff">LevelMaker</div>
<svg class="a" style="left:1449px;top:650px" width="42" height="58" viewBox="0 0 42 58"><path d="M1 1h31l9 9v47H1z" fill="#dfe2e6"/><path d="M32 1v9h9z" fill="#f4f5f7"/><path d="M1 57h40" stroke="#c4c7cc" stroke-width="1"/><text x="21" y="45.600" text-anchor="middle" font-family="Liberation Sans, sans-serif" font-size="24" fill="#4c6fc8" stroke="#4c6fc8" stroke-width=".45">C#</text></svg>
<div class="t" style="left:1420px;top:713px;width:100px;text-align:center;font-size:10px">LoadScene</div>
<svg class="a" style="left:1297px;top:743px" width="42" height="58" viewBox="0 0 42 58"><path d="M1 1h31l9 9v47H1z" fill="#dfe2e6"/><path d="M32 1v9h9z" fill="#f4f5f7"/><path d="M1 57h40" stroke="#c4c7cc" stroke-width="1"/><text x="21" y="45.600" text-anchor="middle" font-family="Liberation Sans, sans-serif" font-size="24" fill="#4c6fc8" stroke="#4c6fc8" stroke-width=".45">C#</text></svg>
<div class="t" style="left:1268px;top:806px;width:100px;text-align:center;font-size:10px">PlayerCont…</div>
<svg class="a" style="left:1373px;top:743px" width="42" height="58" viewBox="0 0 42 58"><path d="M1 1h31l9 9v47H1z" fill="#dfe2e6"/><path d="M32 1v9h9z" fill="#f4f5f7"/><path d="M1 57h40" stroke="#c4c7cc" stroke-width="1"/><text x="21" y="45.600" text-anchor="middle" font-family="Liberation Sans, sans-serif" font-size="24" fill="#4c6fc8" stroke="#4c6fc8" stroke-width=".45">C#</text></svg>
<div class="t" style="left:1344px;top:806px;width:100px;text-align:center;font-size:10px">TimeManag…</div>
<div class="a" style="left:1270px;top:994px;width:247px;height:16px;background:#dcdcdc;border-top:1px solid #a8a8a8"></div>
<div class="a seg b" style="left:1277px;top:999px;font-size:7px;color:#4a72c8;letter-spacing:-.5px">C#</div>
<div class="t" style="left:1291px;top:995px">LevelMaker.cs</div>
<div class="a" style="left:1447px;top:1001px;width:55px;height:3px;border-radius:2px;background:#8d8d8d"></div>
<div class="a" style="left:1473px;top:997px;width:10px;height:10px;border-radius:5px;background:linear-gradient(#f4f4f4,#c8c8c8);border:1px solid #666"></div>
<!-- Inspector panel -->
<div class="panel" style="left:1522px;top:100px;width:390px;height:910px;border-left:1px solid #8a8a8a"></div>
<div class="tab" style="left:1522px;top:83px;width:98px"></div>
<svg class="a" style="left:1530px;top:86px" width="11" height="11" viewBox="0 0 11 11"><circle cx="5.500" cy="5.500" r="5" fill="#333"/><rect x="4.700" y="4.500" width="1.800" height="4" fill="#fff"/><rect x="4.700" y="2" width="1.800" height="1.700" fill="#fff"/></svg>
<div class="tabt" style="left:1545px;top:84px">Inspector</div>
<svg class="a" style="left:1630px;top:86px" width="12" height="11" viewBox="0 0 12 11"><path d="M0 2h12M0 5.500h12M0 9h12" stroke="#444" stroke-width="1"/><path d="M7.500 0v4M3.500 3.500v4M8.500 7v4" stroke="#444" stroke-width="1.600"/></svg>
<div class="tabt" style="left:1645px;top:84px;color:#222">Lighting</div>
<div class="tabt" style="left:1728px;top:84px;color:#222">Services</div>
<svg class="a" style="left:1879px;top:88px" width="9" height="10" viewBox="0 0 9 10"><rect x=".5" y="4.500" width="8" height="5" fill="#555"/><path d="M2.500 4.500V3a2 2 0 0 1 4 0V4.500" fill="none" stroke="#555" stroke-width="1.200"/></svg>
<div class="dd" style="left:1893px;top:94px;border-left-width:2.500px;border-right-width:2.500px;border-top-width:3px;border-top-color:#444"></div><div class="a" style="left:1899px;top:93px;width:8px;height:1px;background:#444;box-shadow:0 2px 0 #444,0 4px 0 #444"></div>
<div class="a" style="left:1523px;top:100px;width:375px;height:42px;background:linear-gradient(#e2e2e2,#dadada);border-top:1px solid #f4f4f4;border-bottom:1px solid #9c9c9c"></div>
<svg class="a" style="left:1532px;top:103px" width="22" height="33" viewBox="0 0 22 33"><path d="M.5.5h16l5 5v27H.5z" fill="#e4e7ec"/><path d="M16.500.5v5h5z" fill="#f6f7f9"/><text x="11.300" y="27" text-anchor="middle" font-family="Liberation Sans, sans-serif" font-size="13" fill="#4a72c8">C#</text></svg>
<div class="dd" style="left:1530px;top:131px;border-left-width:3.500px;border-right-width:3.500px;border-top-width:4px;border-top-color:#222"></div>
<div class="t" style="left:1567px;top:105px;font-size:12.500px">LevelMaker Import Settings</div>
<svg class="a" style="left:1863px;top:106px" width="11" height="11" viewBox="0 0 12 12"><path d="M0 3h7.500M0 8.500h3M7 8.500h4.500" stroke="#333" stroke-width="1.400"/><path d="M10 0v6.200M5 5.800v6" stroke="#333" stroke-width="2.200"/></svg>
<svg class="a" style="left:1881px;top:106px" width="12.600" height="10.800" viewBox="0 0 14 12"><circle cx="5.500" cy="5.500" r="3" fill="none" stroke="#333" stroke-width="2.200"/><path d="M5.500 0v11M0 5.500h11M1.600 1.600l7.800 7.800M9.400 1.600 1.600 9.400" stroke="#333" stroke-width="1.600"/><circle cx="5.500" cy="5.500" r="1.500" fill="#dedede"/><path d="M10.300 8.500h4.200l-2.100 3z" fill="#333"/></svg>
<div class="btn" style="left:1736px;top:124px;width:47px;height:15px;border-radius:3px"></div><div class="t" style="left:1742px;top:124px;font-size:10px">Open...</div>
<div class="btn" style="left:1788px;top:124px;width:103px;height:15px;border-radius:3px"></div><div class="t" style="left:1794px;top:124px;font-size:10px">Execution Order...</div>
<div class="t" style="left:1537px;top:150px;width:127px;overflow:hidden">Four Door Room</div>
<div class="a" style="left:1664px;top:149px;width:211px;height:16px;background:#d4d4d4;border:1px solid #8b8b8b;border-top-color:#6f6f6f;box-shadow:inset 0 1px 1px rgba(0,0,0,.18)"></div>
<svg class="a" style="left:1667px;top:151px" width="12" height="12" viewBox="0 0 12 12"><path d="M1 3l5 2.500v6L1 9z" fill="#5a9fe0"/><path d="M6 5.500 11 3v6l-5 2.500z" fill="#e0532f"/><path d="M6 .5 11 3 6 5.500 1 3z" fill="#a9d68f"/></svg>
<div class="t" style="left:1680px;top:150px">None (Game Object)</div>
<svg class="a" style="left:1882px;top:152px" width="9" height="9" viewBox="0 0 9 9"><circle cx="4.500" cy="4.500" r="3.300" fill="none" stroke="#2a2a2a" stroke-width="1.250"/><circle cx="4.500" cy="4.500" r="1.100" fill="#2a2a2a"/></svg>
<div class="t" style="left:1537px;top:168px;width:127px;overflow:hidden">Three Door Room Up</div>
<div class="a" style="left:1664px;top:167px;width:211px;height:16px;background:#d4d4d4;border:1px solid #8b8b8b;border-top-color:#6f6f6f;box-shadow:inset 0 1px 1px rgba(0,0,0,.18)"></div>
<svg class="a" style="left:1667px;top:169px" width="12" height="12" viewBox="0 0 12 12"><path d="M1 3l5 2.500v6L1 9z" fill="#5a9fe0"/><path d="M6 5.500 11 3v6l-5 2.500z" fill="#e0532f"/><path d="M6 .5 11 3 6 5.500 1 3z" fill="#a9d68f"/></svg>
<div class="t" style="left:1680px;top:168px">None (Game Object)</div>
<svg class="a" style="left:1882px;top:170px" width="9" height="9" viewBox="0 0 9 9"><circle cx="4.500" cy="4.500" r="3.300" fill="none" stroke="#2a2a2a" stroke-width="1.250"/><circle cx="4.500" cy="4.500" r="1.100" fill="#2a2a2a"/></svg>
<div class="t" style="left:1537px;top:186px;width:127px;overflow:hidden">Three Door Room Down</div>
<div class="a" style="left:1664px;top:185px;width:211px;height:16px;background:#d4d4d4;border:1px solid #8b8b8b;border-top-color:#6f6f6f;box-shadow:inset 0 1px 1px rgba(0,0,0,.18)"></div>
<svg class="a" style="left:1667px;top:187px" width="12" height="12" viewBox="0 0 12 12"><path d="M1 3l5 2.500v6L1 9z" fill="#5a9fe0"/><path d="M6 5.500 11 3v6l-5 2.500z" fill="#e0532f"/><path d="M6 .5 11 3 6 5.500 1 3z" fill="#a9d68f"/></svg>
<div class="t" style="left:1680px;top:186px">None (Game Object)</div>
<svg class="a" style="left:1882px;top:188px" width="9" height="9" viewBox="0 0 9 9"><circle cx="4.500" cy="4.500" r="3.300" fill="none" stroke="#2a2a2a" stroke-width="1.250"/><circle cx="4.500" cy="4.500" r="1.100" fill="#2a2a2a"/></svg>
<div class="t" style="left:1537px;top:204px;width:127px;overflow:hidden">Two Door Room Ver</div>
<div class="a" style="left:1664px;top:203px;width:211px;height:16px;background:#d4d4d4;border:1px solid #8b8b8b;border-top-color:#6f6f6f;box-shadow:inset 0 1px 1px rgba(0,0,0,.18)"></div>
<svg class="a" style="left:1667px;top:205px" width="12" height="12" viewBox="0 0 12 12"><path d="M1 3l5 2.500v6L1 9z" fill="#5a9fe0"/><path d="M6 5.500 11 3v6l-5 2.500z" fill="#e0532f"/><path d="M6 .5 11 3 6 5.500 1 3z" fill="#a9d68f"/></svg>
<div class="t" style="left:1680px;top:204px">None (Game Object)</div>
<svg class="a" style="left:1882px;top:206px" width="9" height="9" viewBox="0 0 9 9"><circle cx="4.500" cy="4.500" r="3.300" fill="none" stroke="#2a2a2a" stroke-width="1.250"/><circle cx="4.500" cy="4.500" r="1.100" fill="#2a2a2a"/></svg>
<div class="t" style="left:1537px;top:222px;width:127px;overflow:hidden">Two Door Room Hor</div>
<div class="a" style="left:1664px;top:221px;width:211px;height:16px;background:#d4d4d4;border:1px solid #8b8b8b;border-top-color:#6f6f6f;box-shadow:inset 0 1px 1px rgba(0,0,0,.18)"></div>
<svg class="a" style="left:1667px;top:223px" width="12" height="12" viewBox="0 0 12 12"><path d="M1 3l5 2.500v6L1 9z" fill="#5a9fe0"/><path d="M6 5.500 11 3v6l-5 2.500z" fill="#e0532f"/><path d="M6 .5 11 3 6 5.500 1 3z" fill="#a9d68f"/></svg>
<div class="t" style="left:1680px;top:222px">None (Game Object)</div>
<svg class="a" style="left:1882px;top:224px" width="9" height="9" viewBox="0 0 9 9"><circle cx="4.500" cy="4.500" r="3.300" fill="none" stroke="#2a2a2a" stroke-width="1.250"/><circle cx="4.500" cy="4.500" r="1.100" fill="#2a2a2a"/></svg>
<div class="t" style="left:1537px;top:240px;width:127px;overflow:hidden">One Door Room</div>
<div class="a" style="left:1664px;top:239px;width:211px;height:16px;background:#d4d4d4;border:1px solid #8b8b8b;border-top-color:#6f6f6f;box-shadow:inset 0 1px 1px rgba(0,0,0,.18)"></div>
<svg class="a" style="left:1667px;top:241px" width="12" height="12" viewBox="0 0 12 12"><path d="M1 3l5 2.500v6L1 9z" fill="#5a9fe0"/><path d="M6 5.500 11 3v6l-5 2.500z" fill="#e0532f"/><path d="M6 .5 11 3 6 5.500 1 3z" fill="#a9d68f"/></svg>
<div class="t" style="left:1680px;top:240px">None (Game Object)</div>
<svg class="a" style="left:1882px;top:242px" width="9" height="9" viewBox="0 0 9 9"><circle cx="4.500" cy="4.500" r="3.300" fill="none" stroke="#2a2a2a" stroke-width="1.250"/><circle cx="4.500" cy="4.500" r="1.100" fill="#2a2a2a"/></svg>
<div class="t" style="left:1537px;top:258px;width:127px;overflow:hidden">Door Cap</div>
<div class="a" style="left:1664px;top:257px;width:211px;height:16px;background:#d4d4d4;border:1px solid #8b8b8b;border-top-color:#6f6f6f;box-shadow:inset 0 1px 1px rgba(0,0,0,.18)"></div>
<svg class="a" style="left:1667px;top:259px" width="12" height="12" viewBox="0 0 12 12"><path d="M1 3l5 2.500v6L1 9z" fill="#5a9fe0"/><path d="M6 5.500 11 3v6l-5 2.500z" fill="#e0532f"/><path d="M6 .5 11 3 6 5.500 1 3z" fill="#a9d68f"/></svg>
<div class="t" style="left:1680px;top:258px">None (Game Object)</div>
<svg class="a" style="left:1882px;top:260px" width="9" height="9" viewBox="0 0 9 9"><circle cx="4.500" cy="4.500" r="3.300" fill="none" stroke="#2a2a2a" stroke-width="1.250"/><circle cx="4.500" cy="4.500" r="1.100" fill="#2a2a2a"/></svg>
<div class="a" style="left:1535px;top:278px;width:358px;height:37px;border:1px solid #8e8e8e;border-radius:3px;background:#cbcbcb"></div>
<svg class="a" style="left:1544px;top:286px" width="21" height="20" viewBox="0 0 21 20"><path d="M10.500 1a8.500 7.500 0 1 1-3 14.500L4 18l1-3.500A8.500 7.500 0 0 1 10.500 1z" fill="#f4f4f4" stroke="#888" stroke-width="1"/><rect x="9.700" y="4" width="1.800" height="6.500" fill="#444"/><rect x="9.700" y="11.800" width="1.800" height="1.800" fill="#444"/></svg>
<div class="t" style="left:1572px;top:289px;font-size:9.750px">Default references will only be applied in edit mode.</div>
<div class="a" style="left:1523px;top:334px;width:375px;height:1px;background:#8c8c8c"></div>
<div class="a" style="left:1523px;top:335px;width:375px;height:18px;background:#dcdcdc"></div>
<div class="t" style="left:1526px;top:337px">Imported Object</div>
<div class="a" style="left:1523px;top:353px;width:375px;height:4px;background:#c8c8c8;border-bottom:1px solid #9c9c9c"></div>
<div class="a" style="left:1523px;top:357px;width:375px;height:44px;background:linear-gradient(#e2e2e2,#dadada);border-bottom:1px solid #9c9c9c"></div>
<svg class="a" style="left:1532px;top:363px" width="22" height="30" viewBox="0 0 22 30"><path d="M.5.5h16l5 5v24H.5z" fill="#e4e7ec"/><path d="M16.500.5v5h5z" fill="#f6f7f9"/><text x="11.300" y="23.500" text-anchor="middle" font-family="Liberation Sans, sans-serif" font-size="12.500" fill="#4a72c8">C#</text></svg>
<div class="t" style="left:1567px;top:362px;font-size:12.500px">LevelMaker</div>
<svg class="a" style="left:1842px;top:362px" width="14" height="14" viewBox="0 0 14 14"><path d="M1.500 1.500h9l2 1.500v9.500h-11z" fill="#5a7cc0" stroke="#2a447c" stroke-width="1"/><rect x="3" y="3" width="6.500" height="7" fill="#a9c0ea"/><text x="6.300" y="9.300" text-anchor="middle" font-family="Liberation Sans, sans-serif" font-size="7" font-weight="bold" fill="#2a447c">?</text></svg>
<svg class="a" style="left:1863px;top:363px" width="11" height="11" viewBox="0 0 12 12"><path d="M0 3h7.500M0 8.500h3M7 8.500h4.500" stroke="#333" stroke-width="1.400"/><path d="M10 0v6.200M5 5.800v6" stroke="#333" stroke-width="2.200"/></svg>
<svg class="a" style="left:1881px;top:363px" width="12.600" height="10.800" viewBox="0 0 14 12"><circle cx="5.500" cy="5.500" r="3" fill="none" stroke="#333" stroke-width="2.200"/><path d="M5.500 0v11M0 5.500h11M1.600 1.600l7.800 7.800M9.400 1.600 1.600 9.400" stroke="#333" stroke-width="1.600"/><circle cx="5.500" cy="5.500" r="1.500" fill="#dedede"/><path d="M10.300 8.500h4.200l-2.100 3z" fill="#333"/></svg>
<div class="t b" style="left:1537px;top:412px;font-size:11.700px">Assembly Information</div>
<div class="t" style="left:1537px;top:432px">Filename</div>
<div class="t" style="left:1666px;top:432px">Assembly-CSharp.dll</div>
<div class="a" style="left:1523px;top:452px;width:375px;height:1px;background:#8c8c8c"></div>
<div class="a" style="left:1523px;top:453px;width:375px;height:513px;background:#dedede;overflow:hidden">
<div class="t" style="left:1px;top:3px;line-height:15px;height:15px;font-size:11.400px">using System.Collections;</div>
<div class="t" style="left:1px;top:16px;line-height:15px;height:15px;font-size:11.400px">using System.Collections.Generic;</div>
<div class="t" style="left:1px;top:29px;line-height:15px;height:15px;font-size:11.400px">using UnityEngine;</div>
<div class="t" style="left:1px;top:42px;line-height:15px;height:15px;font-size:11.400px"></div>
<div class="t" style="left:1px;top:55px;line-height:15px;height:15px;font-size:11.400px">public class LevelMaker : MonoBehaviour</div>
<div class="t" style="left:1px;top:68px;line-height:15px;height:15px;font-size:11.400px">{</div>
<div class="t" style="left:17.5px;top:81px;line-height:15px;height:15px;font-size:11.400px">#region Prefabs of the objects that will spawn</div>
<div class="t" style="left:17.5px;top:94px;line-height:15px;height:15px;font-size:11.400px">public GameObject FourDoorRoom;</div>
<div class="t" style="left:17.5px;top:107px;line-height:15px;height:15px;font-size:11.400px">public GameObject ThreeDoorRoomUp;</div>
<div class="t" style="left:17.5px;top:120px;line-height:15px;height:15px;font-size:11.400px">public GameObject ThreeDoorRoomDown;</div>
<div class="t" style="left:17.5px;top:133px;line-height:15px;height:15px;font-size:11.400px">public GameObject TwoDoorRoomVer;</div>
<div class="t" style="left:17.5px;top:146px;line-height:15px;height:15px;font-size:11.400px">public GameObject TwoDoorRoomHor;</div>
<div class="t" style="left:17.5px;top:159px;line-height:15px;height:15px;font-size:11.400px">public GameObject OneDoorRoom;</div>
<div class="t" style="left:17.5px;top:172px;line-height:15px;height:15px;font-size:11.400px">public GameObject DoorCap;</div>
<div class="t" style="left:17.5px;top:185px;line-height:15px;height:15px;font-size:11.400px">#endregion</div>
<div class="t" style="left:17.5px;top:198px;line-height:15px;height:15px;font-size:11.400px">#region Designer changeable values</div>
<div class="t" style="left:17.5px;top:211px;line-height:15px;height:15px;font-size:11.400px">public int numOfRooms;  //changeable in editor to decide how</div>
<div class="t" style="left:1px;top:224px;line-height:15px;height:15px;font-size:11.400px">many rooms to spawn</div>
<div class="t" style="left:17.5px;top:237px;line-height:15px;height:15px;font-size:11.400px">public int blockSpace = 5;  //distance between middle of each</div>
<div class="t" style="left:1px;top:250px;line-height:15px;height:15px;font-size:11.400px">room</div>
<div class="t" style="left:17.5px;top:263px;line-height:15px;height:15px;font-size:11.400px">#endregion</div>
<div class="t" style="left:17.5px;top:276px;line-height:15px;height:15px;font-size:11.400px">#region A static random value</div>
<div class="t" style="left:17.5px;top:289px;line-height:15px;height:15px;font-size:11.400px">public static System.Random rnd;  //used to both find a</div>
<div class="t" style="left:1px;top:302px;line-height:15px;height:15px;font-size:11.400px">random location in opendoorlist and what random room to</div>
<div class="t" style="left:1px;top:315px;line-height:15px;height:15px;font-size:11.400px">spawn</div>
<div class="t" style="left:17.5px;top:328px;line-height:15px;height:15px;font-size:11.400px">#endregion</div>
<div class="t" style="left:17.5px;top:341px;line-height:15px;height:15px;font-size:11.400px">#region Lists for spawning rooms</div>
<div class="t" style="left:17.5px;top:354px;line-height:15px;height:15px;font-size:11.400px">[HideInInspector]</div>
<div class="t" style="left:17.5px;top:367px;line-height:15px;height:15px;font-size:11.400px">public List&lt;GameObject&gt; RoomList;  //list of all spawned</div>
<div class="t" style="left:1px;top:380px;line-height:15px;height:15px;font-size:11.400px">rooms</div>
<div class="t" style="left:17.5px;top:393px;line-height:15px;height:15px;font-size:11.400px">private List&lt;Transform&gt; OpenDoorList;  //List of Transforms</div>
<div class="t" style="left:1px;top:406px;line-height:15px;height:15px;font-size:11.400px">about where the open doors are at in the map</div>
<div class="t" style="left:17.5px;top:419px;line-height:15px;height:15px;font-size:11.400px">private List&lt;GameObject&gt; CapsOfRooms;  //List of all the</div>
<div class="t" style="left:1px;top:432px;line-height:15px;height:15px;font-size:11.400px">caps on the rooms that were open after all rooms had been</div>
<div class="t" style="left:1px;top:445px;line-height:15px;height:15px;font-size:11.400px">spawned</div>
<div class="t" style="left:17.5px;top:458px;line-height:15px;height:15px;font-size:11.400px">private List&lt;Transform&gt; DoorsToRemove;  //List of the doors</div>
<div class="t" style="left:1px;top:471px;line-height:15px;height:15px;font-size:11.400px">that were connected during spawning and should be removed</div>
<div class="t" style="left:17.5px;top:484px;line-height:15px;height:15px;font-size:11.400px">#endregion</div>
<div class="t" style="left:17.5px;top:497px;line-height:15px;height:15px;font-size:11.400px">#region Private integers to be used throughout many</div>
<div class="t" style="left:1px;top:510px;line-height:15px;height:15px;font-size:11.400px">functions</div>
</div>
<div class="a" style="left:1898px;top:100px;width:14px;height:866px;background:#c6c6c6;border-left:1px solid #a2a2a2"></div>
<div class="a" style="left:1901px;top:104px;width:0;height:0;border-left:4px solid transparent;border-right:4px solid transparent;border-bottom:6px solid #444"></div>
<div class="a" style="left:1901px;top:953px;width:0;height:0;border-left:4px solid transparent;border-right:4px solid transparent;border-top:6px solid #444"></div>
<div class="a" style="left:1899px;top:116px;width:12px;height:250px;border-radius:6px;background:linear-gradient(90deg,#8ea2c4,#6f87b2 50%,#5f78a6);border:1px solid #4f668f"></div>
<div class="a" style="left:1899px;top:366px;width:12px;height:582px;border-radius:0 0 6px 6px;background:#e4e4e4;border:1px solid #b4b4b4;border-top:none"></div>
<div class="a" style="left:1523px;top:966px;width:389px;height:17px;background:linear-gradient(#707070,#484848);border-top:1px solid #3a3a3a;border-bottom:1px solid #1e1e1e"></div>
<div class="t b" style="left:1527px;top:966px;color:#e0e0e0;text-shadow:0 1px 0 #222">Asset Labels</div>
<div class="a" style="left:1523px;top:983px;width:389px;height:27px;background:#2c2c2c"></div>
<div class="a" style="left:1887px;top:988px;width:20px;height:15px;border-radius:10px/7.500px;background:#2f66c0"></div>
<svg class="a" style="left:1891px;top:990px" width="11" height="10" viewBox="0 0 11 10"><path d="M.5.5h4.500l5.500 5-4 4-6-5z" fill="#fff"/><circle cx="2.800" cy="2.800" r="1" fill="#2f62b8"/></svg>
<!-- status bar -->
<div class="a" style="left:8px;top:1010px;width:1904px;height:22px;background:#a5a5a5"></div>
<svg class="a" style="left:10px;top:1014px" width="16" height="15" viewBox="0 0 16 15"><path d="M8 1 15 14H1z" fill="#ffd92a" stroke="#b08a00" stroke-width="1" stroke-linejoin="round"/><path d="M8 3.500 12.500 12.500h-9z" fill="#fff2a0" opacity=".55"/><rect x="7.300" y="5.500" width="1.400" height="4.500" fill="#8a6a00"/><rect x="7.300" y="11" width="1.400" height="1.400" fill="#8a6a00"/></svg>
<div class="t" style="left:28px;top:1015px;color:#2b2b2b">Assets/Scripts/LevelMaker.cs(55,40): warning CS0618: `UnityEngine.Random.seed' is obsolete: `Deprecated. Use InitState() function or Random.state property instead.'</div>
<div class="a" style="left:1700px;top:1012px;width:184px;height:18px;background:#bcbcbc;border:1px solid #9a9a9a;border-left:2px solid #8c8ce0"></div>
<!-- Windows taskbar -->
<div class="a" style="left:0;top:1040px;width:1920px;height:40px;background:linear-gradient(90deg,#1b1512 0,#1d1713 45%,#15110e 65%,#0b0a09 80%,#090909 100%)"></div>
<div class="a" style="left:0;top:1040px;width:48px;height:40px;background:#0b0b0a"></div>
<svg class="a" style="left:16px;top:1052px" width="17" height="17" viewBox="0 0 17 17"><path d="M0 2.300 6.900 1.300v6.700H0zM7.800 1.200 17 0v8H7.800zM0 8.900h6.900v6.700L0 14.600zM7.800 8.900H17V17l-9.200-1.300z" fill="#fff"/></svg>
<div class="a" style="left:48px;top:1040px;width:344px;height:40px;background:#363636"></div>
<div class="a" style="left:57px;top:1050px;width:21px;height:21px;border-radius:11px;border:2.500px solid #fff;box-shadow:0 0 0 1px #6e6e6e,inset 0 0 0 .5px #999"></div>
<div class="t seg" style="left:88px;top:1050px;font-size:14.500px;line-height:20px;height:20px;color:#b8b8b8">Type here to search</div>
<svg class="a" style="left:364px;top:1051px" width="14" height="19" viewBox="0 0 14 19"><rect x="4.500" y="1" width="5" height="10" rx="2.500" fill="none" stroke="#bdbdbd" stroke-width="1.200"/><path d="M2 9v1a5 5 0 0 0 10 0V9M7 15v3M4 18h6" fill="none" stroke="#bdbdbd" stroke-width="1.200"/></svg>
<svg class="a" style="left:407px;top:1051px" width="20" height="18" viewBox="0 0 20 18"><path d="M1 1h12M1 17h12" stroke="#fff" stroke-width="1.400"/><rect x="1.700" y="4.700" width="10.600" height="8.600" fill="none" stroke="#fff" stroke-width="1.400"/><path d="M16 1v3M16 7v10" stroke="#fff" stroke-width="1.600"/></svg>
<svg class="a" style="left:456px;top:1050px" width="21" height="21" viewBox="-11.500 -11.500 23 23"><path d="M10.05 -1.73L10.05 1.73L7.34 1.95L6.57 3.81L8.33 5.89L5.89 8.33L3.81 6.57L1.95 7.34L1.73 10.05L-1.73 10.05L-1.95 7.34L-3.81 6.57L-5.89 8.33L-8.33 5.89L-6.57 3.81L-7.34 1.95L-10.05 1.73L-10.05 -1.73L-7.34 -1.95L-6.57 -3.81L-8.33 -5.89L-5.89 -8.33L-3.81 -6.57L-1.95 -7.34L-1.73 -10.05L1.73 -10.05L1.95 -7.34L3.81 -6.57L5.89 -8.33L8.33 -5.89L6.57 -3.81L7.34 -1.95ZM4.200 0A4.200 4.200 0 1 0 -4.200 0A4.200 4.200 0 1 0 4.200 0Z" fill="#fff" fill-rule="evenodd" transform="rotate(22.500)"/></svg>
<svg class="a" style="left:503px;top:1048px" width="26" height="22" viewBox="0 0 26 22"><path d="M0 9 13 1.500 26 9V21H0z" fill="#fff"/><path d="M3.200 9.600 13 5.200 22.800 9.600 13 15.800z" fill="#1b1512"/></svg>
<div class="a" style="left:518px;top:1057px;width:20px;height:20px;border-radius:10px;background:#3a3a3a;border:1.500px solid #9a9a9a"></div>
<div class="t seg b" style="left:518px;top:1059px;width:20px;text-align:center;font-size:11px;color:#fff;letter-spacing:-.3px">24</div>
<svg class="a" style="left:554px;top:1050px" width="22" height="19" viewBox="0 0 24 22" preserveAspectRatio="none"><path d="M1 3h8l2 2h12v4H1z" fill="#f0b429"/><path d="M1 7h22v14H1z" fill="#ffd766"/><path d="M1 7h22v3H1z" fill="#ffe28a"/><path d="M5 13h14v8H5z" fill="#3e9be0"/><path d="M8 16h8v5H8z" fill="#ffe9a8"/></svg>
<svg class="a" style="left:602px;top:1048px" width="24" height="24" viewBox="-12 -12 24 24"><path d="M0 0L-9.96 -5.75A11.5 11.5 0 0 1 9.96 -5.75Z" fill="#de3e31"/><path d="M0 0L9.96 -5.75A11.5 11.5 0 0 1 0.00 11.50Z" fill="#f7c11e"/><path d="M0 0L0.00 11.50A11.5 11.5 0 0 1 -9.96 -5.75Z" fill="#2fa04e"/><path d="M0 -5.300H10.400A11.500 11.500 0 0 0 -9.960 -5.750L-4.600 2.650z" fill="#de3e31"/><path d="M4.600 2.650 -0.600 11.480A11.500 11.500 0 0 0 10.400 -5.300H0z" fill="#f7c11e"/><path d="M-4.600 2.650-9.960-5.750A11.500 11.500 0 0 0 -0.600 11.480L4.600 2.650z" fill="#2fa04e"/><circle r="5.300" fill="#fff"/><circle r="4.200" fill="#4a86e8"/></svg>
<div class="a" style="left:639px;top:1040px;width:48px;height:40px;background:#48433f"></div>
<svg class="a" style="left:651px;top:1047px" width="23" height="24" viewBox="0 0 18 18"><path d="M15.800 7.200 13.700 1.800 1.800 8.300 13.700 15.200 15.800 9.800 14.800 8.500z" fill="#fff" stroke="#161310" stroke-width="1.300" stroke-linejoin="round"/><path d="M1.800 8.400H10.400M10.400 8.400 13.700 1.800M10.400 8.400 13.700 15.200" fill="none" stroke="#161310" stroke-width="1.500"/></svg>
<svg class="a" style="left:702px;top:1049px" width="20" height="22" viewBox="0 0 25 26"><path d="M3 0h19a3 3 0 0 1 3 3v23l-5.500-4.500H3a3 3 0 0 1-3-3V3a3 3 0 0 1 3-3z" fill="#7a8ad6"/><path d="M6 8q6.500-3 13 0 2 4 2 9-2 2-4 2l-1-1.800q-3.500 1-7 0L8 19q-2 0-4-2 0-5 2-9z" fill="#fff"/><ellipse cx="9.800" cy="13" rx="1.700" ry="2" fill="#7a8ad6"/><ellipse cx="15.200" cy="13" rx="1.700" ry="2" fill="#7a8ad6"/></svg>
<svg class="a" style="left:748px;top:1047px" width="26" height="26" viewBox="-13 -13 26 26"><circle r="12.400" fill="#f0e6f6"/><circle r="11.300" fill="#8e42b0"/><path d="M-6.300 2.200Q-6.800-2-5.800-6.300L-2.600-3.800Q0-4.400 2.600-3.800L5.800-6.300Q6.800-2 6.300 2.200 5.500 7.200 0 7.200-5.500 7.200-6.300 2.200z" fill="#f4eef8"/></svg>
<svg class="a" style="left:798px;top:1047px" width="25" height="26" viewBox="0 0 25 26"><path d="M18 0l7 3v20l-7 3L6 15 2 18.500 0 17.500v-9l2-1 4 3.500zM18 8l-6 5 6 5zM2 10.500v5L4.500 13z" fill="#8661c5"/><path d="M18 0l7 3v20l-7 3z" fill="#6d4ab2" opacity=".6"/></svg>
<svg class="a" style="left:850px;top:1048px" width="18" height="23" viewBox="0 0 21 26"><path d="M0 0h15l6 6v20H0z" fill="#d9e8fb"/><path d="M15 0v6h6z" fill="#a9c4ea"/><path d="M0 0h15v6h6v20H0z" fill="none" stroke="#c2d6f2" stroke-width=".6"/></svg>
<div class="a" style="left:545px;top:1078px;width:40px;height:2px;background:#8fb6dc"></div>
<div class="a" style="left:594px;top:1078px;width:40px;height:2px;background:#8fb6dc"></div>
<div class="a" style="left:639px;top:1078px;width:48px;height:2px;background:#8fb6dc"></div>
<div class="a" style="left:741px;top:1078px;width:40px;height:2px;background:#8fb6dc"></div>
<div class="a" style="left:790px;top:1078px;width:40px;height:2px;background:#8fb6dc"></div>
<div class="a" style="left:839px;top:1078px;width:40px;height:2px;background:#8fb6dc"></div>
<svg class="a" style="left:1675px;top:1051px" width="17" height="17" viewBox="0 0 17 17"><circle cx="11" cy="4" r="2.800" fill="none" stroke="#fff" stroke-width="1.200"/><path d="M6.500 11.500a4.500 4.500 0 0 1 9 0" fill="none" stroke="#fff" stroke-width="1.200"/><circle cx="5" cy="9" r="2.300" fill="none" stroke="#fff" stroke-width="1.200"/><path d="M1 16.500a4 4 0 0 1 8 0" fill="none" stroke="#fff" stroke-width="1.200"/></svg>
<svg class="a" style="left:1712px;top:1056px" width="14" height="8" viewBox="0 0 14 8"><path d="M1 7.500 7 1.500l6 6" fill="none" stroke="#fff" stroke-width="1.300"/></svg>
<svg class="a" style="left:1734px;top:1054px" width="18" height="12" viewBox="0 0 18 12"><rect x="4.500" y="2.500" width="11" height="7" fill="none" stroke="#fff" stroke-width="1.100"/><rect x="16" y="4.500" width="1.500" height="3" fill="#fff"/><rect x="6" y="4" width="5" height="4" fill="#fff"/><path d="M2 0v2.500M4 0v2.500M.5 2.500h5v2a2.500 2.500 0 0 1-5 0zM3 7v3.500h2" fill="none" stroke="#fff" stroke-width="1"/></svg>
<svg class="a" style="left:1761px;top:1054px" width="15" height="13" viewBox="0 0 15 13"><path d="M1 8A10 10 0 0 1 14 1.500M3.500 9.500A7 7 0 0 1 13 4.500M6 11a4 4 0 0 1 6-3.500" fill="none" stroke="#fff" stroke-width="1.300"/><circle cx="11.500" cy="11" r="1.500" fill="#fff"/></svg>
<svg class="a" style="left:1782px;top:1052px" width="18" height="16" viewBox="0 0 18 16"><path d="M1 5.500h2.500L7 2v12l-3.500-3.500H1z" fill="none" stroke="#fff" stroke-width="1.100"/><path d="M9.500 5.500a3.500 3.500 0 0 1 0 5M12 3.500a6.500 6.500 0 0 1 0 9M14.500 1.500a9.500 9.500 0 0 1 0 13" fill="none" stroke="#fff" stroke-width="1.100"/></svg>
<div class="t seg" style="left:1790px;top:1043px;width:90px;text-align:center;font-size:12px;letter-spacing:-.4px;color:#fff">12:07 PM</div>
<div class="t seg" style="left:1790px;top:1060px;width:90px;text-align:center;font-size:12px;color:#fff">1/4/2019</div>
<svg class="a" style="left:1879px;top:1051px" width="17" height="16" viewBox="0 0 17 16"><path d="M0 0h17v12H6l-4 4v-4H0z" fill="#fff"/><path d="M3 3h11M3 5.500h11M3 8h11" stroke="#0b0b0b" stroke-width="1"/></svg>
<div class="a" style="left:1887px;top:1059px;width:16px;height:16px;border-radius:8px;background:#3c3c3c;border:1px solid #777"></div>
<div class="t seg b" style="left:1887px;top:1059px;width:16px;text-align:center;font-size:11px;color:#fff">1</div>
<div class="a" style="left:1915px;top:1040px;width:1px;height:40px;background:#555"></div>
</body></html>
